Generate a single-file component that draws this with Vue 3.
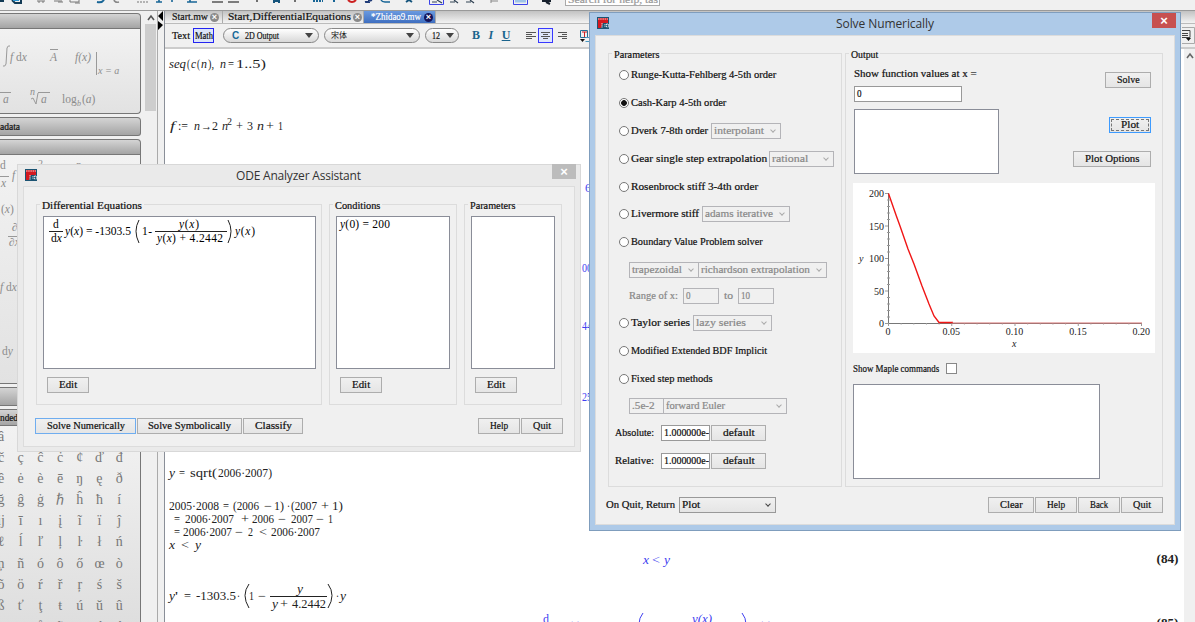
<script setup>
import { ref, h } from "vue";

const method = ref('ck45');
const showCommands = ref(false);

// narrow fixed pitch label, the width follows the number of characters
const Txt = (props) => {
  const w = props.w || props.t.length * 4.54;
  return h('svg', { class: 'txt', width: w, height: 12 }, [
    h('text', { x: 0, y: 9, textLength: w, lengthAdjust: 'spacingAndGlyphs' }, props.t),
  ]);
}
Txt.props = ['t', 'w'];

const methods = [
  { id: 'rkf45', label: 'Runge-Kutta-Fehlberg 4-5th order' },
  { id: 'ck45', label: 'Cash-Karp 4-5th order' },
  { id: 'dverk78', label: 'Dverk 7-8th order', option: 'interpolant', width: 70 },
  { id: 'gear', label: 'Gear single step extrapolation', option: 'rational', width: 65, tight: true },
  { id: 'rosenbrock', label: 'Rosenbrock stiff 3-4th order' },
  { id: 'lsode', label: 'Livermore stiff', option: 'adams iterative', width: 88 },
  { id: 'bvp', label: 'Boundary Value Problem solver' },
]

const moreMethods = [
  { id: 'taylor', label: 'Taylor series', option: 'lazy series', width: 79 },
  { id: 'mebdfi', label: 'Modified Extended BDF Implicit' },
  { id: 'fixed', label: 'Fixed step methods' },
]

const tolerances = ['Absolute:', 'Relative:']

const letters = [
  'â', 'à', 'ă', 'ā', 'ą', 'å', 'ć',
  'č', 'ç', 'ĉ', 'ċ', '¢', 'ď', 'đ',
  'ê', 'ė', 'è', 'ē', 'ŋ', 'ę', 'ð',
  'ğ', 'ĝ', 'ġ', 'ℏ', 'ĥ', 'ħ', 'í',
  'ij', 'ī', 'ı', 'į', 'ĩ', 'ï', 'ĵ',
  'ℓ', 'ĺ', 'ľ', 'ļ', 'ŀ', 'ł', 'ń',
  'ņ', 'ñ', 'ó', 'ô', 'ő', 'œ', 'ò',
  'õ', 'ö', 'ŕ', 'ř', 'ŗ', 'ś', 'š',
  'ß', 'ť', 'ţ', 'ŧ', 'ú', 'ŭ', 'û',
  'ų', 'ų', 'ů', 'ũ', 'ų', 'ý', 'ź',
]

// x, baseline, text, width, italic
const sheet = [
  [4, 19, 'seq', 17, true], [22, 19, '(', 3], [26, 19, 'c', 5, true], [32, 19, '(', 3], [36, 19, 'n', 6, true], [43, 19, '),', 6],
  [55, 19, 'n', 6, true], [63, 19, '=', 6], [71, 19, '1..5)', 30],
  [5, 81, 'f', 5, true], [13, 81, ':=', 10], [29, 81, 'n', 6, true], [36, 81, '→', 11], [47, 81, '2', 6], [57, 81, 'n', 6, true],
  [71, 81, '+', 7], [82, 81, '3', 6], [92, 81, 'n', 7, true], [101, 81, '+', 8], [113, 81, '1', 5],
  [4, 428, 'y', 6, true], [14, 428, '=', 6], [25, 428, 'sqrt(', 27], [53, 428, '2006·2007)', 54],
  [4, 461, '2005·2008', 50], [58, 461, '=', 6], [68, 461, '(2006', 26], [99, 461, '−', 8], [109, 461, '1)', 10], [122, 461, '·', 3],
  [126, 461, '(2007', 26], [156, 461, '+', 8], [167, 461, '1)', 11],
  [9, 474, '=', 6], [20, 474, '2006·2007', 49], [76, 474, '+', 8], [87, 474, '2006', 22], [113, 474, '−', 8], [126, 474, '2007', 22],
  [151, 474, '−', 8], [163, 474, '1', 5],
  [9, 487, '=', 6], [18, 487, '2006·2007', 49], [70, 487, '−', 8], [83, 487, '2', 5], [94, 487, '<', 8], [106, 487, '2006·2007', 49],
  [4, 500, 'x', 6, true], [16, 500, '<', 8], [30, 500, 'y', 6, true],
  [4, 551, 'y', 6, true], [10, 551, "'", 3], [19, 551, '=', 7], [31, 551, '-1303.5', 40], [72, 551, '·', 3], [84, 551, '1', 5], [93, 551, '−', 8],
  [132, 544, 'y', 6, true], [107, 559, 'y', 6, true], [115, 559, '+', 8], [127, 559, '4.2442', 34], [171, 551, '·', 3], [175, 551, 'y', 6, true],
]

const output = [
  [420, 143, '6', 6], [417, 223, '00', 10], [417, 281, '44', 10], [417, 352, '25', 10],
  [478, 515, 'x', 6, true], [487, 515, '<', 8], [499, 515, 'y', 6, true],
  [378, 574, 'd', 6], [399, 581, 'y(x)', 16, true], [420, 581, '= -1303.5', 50], [480, 581, '1 −', 16],
  [527, 574, 'y(x)', 20, true], [588, 581, 'y(x)', 18, true],
]

const yTicks = [200, 150, 100, 50, 0]
const xTicks = ['0', '0.05', '0.10', '0.15', '0.20']
</script>

<template>
  <div class="desktop">
    <div class="topbar">
      <svg width="565" height="10" fill="none">
        <path d="M0 1h4M12 0l3 3h6V0" stroke="#123a55" stroke-width="2" />
        <path d="M13 0h6" stroke="#2b93d0" stroke-width="2" />
        <path d="M38 0v2h2V0M42 0v2h2V0M54 1h8M58 2h5M70 0v2h9V0M75 3h5" stroke="#777" />
        <path d="M97 2Q102 3 104 0" stroke="#176596" stroke-width="2" />
        <path d="M114 0Q115 3 119 2" stroke="#888" stroke-width="1.6" />
        <path d="M137 2h11" stroke="#777" stroke-dasharray="2 1" />
        <path d="M159 0v2M156 2h6M172 0v2M187 2h10M190 0v2" stroke="#176596" stroke-width="1.6" />
        <path d="M212 2h11M228 2h11" stroke="#555" stroke-width="1.5" />
        <path d="M257 0v2M295 0v2" stroke="#444" stroke-width="1.5" />
        <path d="M274 0v3M279 0v3M273 1h7" stroke="#15547c" stroke-width="2" />
        <path d="M313 1h10M333 1h2" stroke="#176596" stroke-width="2" stroke-dasharray="2 1" />
        <path d="M348 0Q352 4 356 0" stroke="#cc2020" stroke-width="2" />
        <path d="M365 2l7-2M369 0v3" stroke="#203c78" stroke-width="2" />
        <path d="M381 0Q382 2 385 2h5" stroke="#176596" stroke-width="1.5" />
        <path d="M406 2l3-2 3 2" stroke="#15547c" stroke-width="2" />
        <path d="M429.500 0v4.500h14V0M513.500 0v4.500h14V0" stroke="#3b43e8" />
        <path d="M515 1h11" stroke="#9ec4e8" stroke-width="3" />
        <path d="M432 2h5M437 0l5 3M450 2h5M454 0l4 3M466 2h5M470 0l4 3" stroke="#345" stroke-width="1.2" />
        <path d="M491 1h7M491 0v3" stroke="#888" />
        <path d="M542 1h9M546 2l4 2" stroke="#16202c" stroke-width="2" />
      </svg>
      <div class="search"><Txt t="Search for help, tas" w="90" /></div>
    </div>

    <div class="body">
      <aside class="palettes">
        <div class="bar first"></div>
        <svg class="sheet-one" width="141" height="85">
          <path d="M10 17q-2-1-3 2l-1 16q-1 3-3 2" class="rule" />
          <text x="10" y="32"><tspan class="it">f</tspan> d<tspan class="it">x</tspan></text>
          <path d="M50 20.500h8M96.500 23v23M0 63.500h11M38 63.500h12M31 70l2-1 3 6 2-11" class="rule" />
          <text x="50" y="32" class="it">A</text>
          <text x="75" y="32" class="it">f(x)</text>
          <text x="98" y="45" class="it small">x = a</text>
          <text x="3" y="74" class="it">a</text>
          <text x="30" y="66" class="it small">n</text>
          <text x="41" y="74" class="it">a</text>
          <text x="62" y="74">log</text>
          <text x="77" y="77" class="it tiny">b</text>
          <text x="82" y="74"><tspan>(</tspan><tspan class="it">a</tspan><tspan>)</tspan></text>
        </svg>
        <div class="bar second"><Txt t="adata" w="20" /></div>
        <div class="bar third"></div>
        <svg class="sheet-two" width="141" height="229">
          <text x="0" y="14">d</text>
          <path d="M0 21.500h9M8 81.500h10" class="rule" />
          <text x="1" y="32" class="it">x</text>
          <text x="12" y="24" class="it">f</text>
          <text x="38" y="12" class="small">2</text>
          <text x="76" y="13" class="it small">n</text>
          <text x="1" y="58">(<tspan class="it">x</tspan>)</text>
          <text x="12" y="76">∂</text>
          <text x="9" y="91">∂<tspan class="it">x</tspan></text>
          <text x="0" y="136"><tspan class="it">f</tspan> d<tspan class="it">x</tspan></text>
          <text x="2" y="200">d<tspan class="it">y</tspan></text>
        </svg>
        <div class="bar fourth"></div>
        <div class="bar fifth"><Txt t="nded" w="18" /></div>
        <div class="letters">
          <span v-for="(letter, i) in letters" :key="i">{{ letter }}</span>
        </div>
      </aside>

      <div class="scroll">
        <svg width="12" height="13"><path d="M3 9l3-4 3 4" fill="none" stroke="#555" stroke-width="1.6" /></svg>
        <div class="thumb"></div>
      </div>
      <div class="splitter">
        <svg width="6" height="20"><path d="M5 0v10L0 5zM0 10v9l5-5z" fill="#000" /></svg>
      </div>

      <main class="document">
        <div class="tabs">
          <div class="tab one"><Txt t="Start.mw" w="36" /><i></i></div>
          <div class="tab two"><Txt t="Start,DifferentialEquations" w="123" /><i></i></div>
          <div class="tab active"><Txt t="*Zhidao9.mw" w="50" /><i></i></div>
        </div>
        <div class="format">
          <Txt t="Text" w="18" />
          <span class="math"><Txt t="Math" w="18" /></span>
          <div class="pill style"><b>C</b><Txt t="2D Output" w="34" /><em></em></div>
          <div class="pill face"><span>宋体</span><em></em></div>
          <div class="pill points"><Txt t="12" w="8" /><em></em></div>
          <div class="marks"><b>B</b><b class="it">I</b><b class="under">U</b></div>
          <svg width="72" height="18" class="aligns" fill="none">
            <rect x="13.500" y="1.500" width="14" height="14" fill="#dfe6fb" stroke="#3838ff" />
            <path d="M1 5.500h10M1 7.500h6M1 9.500h10M1 11.500h6M16 5.500h9M18 7.500h5M16 9.500h9M18 11.500h5M33 5.500h9M37 7.500h5M33 9.500h9M37 11.500h5" stroke="#555" />
            <path d="M55.500 3.500h7v7h-7z" stroke="#287094" /><path d="M57 5h5M59.500 5v5" stroke="#c22" />
            <path d="M55 12h5l-2.500 3z" fill="#111" /><path d="M60.500 10.500h4v4h-4" stroke="#4b97be" />
          </svg>
          <svg width="13" height="18" class="last-tool" fill="none">
            <path d="M0 .5h12.500v16H0" stroke="#aaa" /><path d="M0 3.500h8v7H0M0 6.500h6M0 8.500h6" stroke="#444" /><path d="M4 11h5l-2.500 3z" fill="#111" />
          </svg>
        </div>
        <div class="page">
          <svg class="math-sheet" width="1019" height="573">
            <g class="input">
              <text v-for="(s, i) in sheet" :key="i" :x="s[0]" :y="s[1]" :textLength="s[3]" lengthAdjust="spacingAndGlyphs" :class="{ it: s[4] }">{{ s[2] }}</text>
              <text x="62" y="76" class="power">2</text>
              <path d="M105 547.500h57M84 535q-8 11 0 24M163 535q8 11 0 24" fill="none" stroke="#222" />
            </g>
            <g class="output">
              <text v-for="(s, i) in output" :key="i" :x="s[0]" :y="s[1]" :textLength="s[3]" lengthAdjust="spacingAndGlyphs" :class="{ it: s[4] }">{{ s[2] }}</text>
              <path d="M478 564q-4 5-4 11M577 564q4 5 4 11" fill="none" stroke="#4040f0" />
            </g>
            <text x="991.500" y="514" class="number" textLength="22" lengthAdjust="spacingAndGlyphs">(84)</text>
            <text x="991.500" y="578" class="number" textLength="22" lengthAdjust="spacingAndGlyphs">(85)</text>
          </svg>
          <div class="page-scroll">
            <svg width="10" height="13"><path d="M3 9l3-4 3 4" fill="none" stroke="#666" stroke-width="1.6" /></svg>
          </div>
        </div>
      </main>
    </div>

    <section class="window analyzer">
      <header>
        <svg width="13" height="13" class="logo"><rect width="12" height="12" fill="#1b5473" /><path d="M1 1h10v5H6L4 11H1z" fill="#d41920" /><path d="M1 2h10M5 6v5M8 7v3M9.500 7h2v3h-2z" fill="none" stroke="#fff" stroke-width=".8" stroke-dasharray="1.500 .7" /></svg>
        <svg width="126" height="16" class="title"><text x="0" y="12" textLength="125">ODE Analyzer Assistant</text></svg>
        <button class="close">×</button>
      </header>
      <div class="inner">
        <div class="groups">
          <div class="group equations">
            <span class="legend"><Txt t="Differential Equations" w="100" /></span>
            <div class="list">
              <svg width="272" height="40">
                <text x="9" y="11">d</text>
                <text x="7" y="25">d<tspan class="it">x</tspan></text>
                <path d="M5 14.500h14M111 14.500h72M95 3q-6 11 0 23M184 3q6 11 0 23" fill="none" stroke="#222" />
                <text x="21" y="18" textLength="66" lengthAdjust="spacingAndGlyphs"><tspan class="it">y</tspan>(<tspan class="it">x</tspan>) = -1303.5</text>
                <text x="98" y="18" textLength="10">1 -</text>
                <text x="135" y="11" textLength="20"><tspan class="it">y</tspan>(<tspan class="it">x</tspan>)</text>
                <text x="113" y="25" textLength="66"><tspan class="it">y</tspan>(<tspan class="it">x</tspan>) + 4.2442</text>
                <text x="191" y="18" textLength="20"><tspan class="it">y</tspan>(<tspan class="it">x</tspan>)</text>
              </svg>
            </div>
            <button class="edit"><Txt t="Edit" /></button>
          </div>
          <div class="group conditions">
            <span class="legend"><Txt t="Conditions" /></span>
            <div class="list">
              <svg width="110" height="20"><text x="3" y="11" textLength="50"><tspan class="it">y</tspan>(0) = 200</text></svg>
            </div>
            <button class="edit"><Txt t="Edit" /></button>
          </div>
          <div class="group parameters">
            <span class="legend"><Txt t="Parameters" /></span>
            <div class="list"></div>
            <button class="edit"><Txt t="Edit" /></button>
          </div>
        </div>
        <footer>
          <button class="default b101"><Txt t="Solve Numerically" w="78" /></button>
          <button class="b105"><Txt t="Solve Symbolically" w="83" /></button>
          <button class="b60"><Txt t="Classify" w="37" /></button>
          <span class="grow"></span>
          <button class="b42"><Txt t="Help" /></button>
          <button class="b42"><Txt t="Quit" /></button>
        </footer>
      </div>
    </section>

    <section class="window solver">
      <header>
        <svg width="13" height="13" class="logo"><rect width="12" height="12" fill="#1b5473" /><path d="M1 1h10v5H6L4 11H1z" fill="#d41920" /><path d="M1 2h10M5 6v5M8 7v3M9.500 7h2v3h-2z" fill="none" stroke="#fff" stroke-width=".8" stroke-dasharray="1.500 .7" /></svg>
        <svg width="99" height="16" class="title"><text x="0" y="12" textLength="98">Solve Numerically</text></svg>
        <button class="close">×</button>
      </header>
      <div class="inner">
        <div class="columns">
          <div class="group methods">
            <span class="legend"><Txt t="Parameters" /></span>
            <div class="row" v-for="m in methods" :key="m.id" @click="method = m.id">
              <span class="radio" :class="{ on: method === m.id }"></span>
              <Txt :t="m.label" />
              <div v-if="m.option" class="select off" :class="{ tight: m.tight }" :style="{ width: m.width + 'px' }"><Txt :t="m.option" /><em></em></div>
            </div>
            <div class="row sub">
              <div class="select off trap"><Txt t="trapezoidal" /><em></em></div>
              <div class="select off rich"><Txt t="richardson extrapolation" /><em></em></div>
            </div>
            <div class="row sub range">
              <Txt t="Range of x:" w="49" />
              <div class="field off"><Txt t="0" /></div>
              <Txt t="to" />
              <div class="field off"><Txt t="10" /></div>
            </div>
            <div class="row" v-for="m in moreMethods" :key="m.id" @click="method = m.id">
              <span class="radio" :class="{ on: method === m.id }"></span>
              <Txt :t="m.label" />
              <div v-if="m.option" class="select off" :style="{ width: m.width + 'px' }"><Txt :t="m.option" /><em></em></div>
            </div>
            <div class="row sub fixed">
              <div class="field off step"><Txt t=".5e-2" /></div>
              <div class="select off euler"><Txt t="forward Euler" /><em></em></div>
            </div>
            <div class="row tolerance" v-for="name in tolerances" :key="name">
              <Txt :t="name" w="39" />
              <div class="field"><Txt t="1.000000e-" w="45" /></div>
              <button><Txt t="default" /></button>
            </div>
          </div>

          <div class="group result">
            <span class="legend"><Txt t="Output" /></span>
            <div class="values">
              <div class="ask">
                <Txt t="Show function values at x =" />
                <div class="field"><Txt t="0" /></div>
                <div class="area"></div>
              </div>
              <div class="actions">
                <button class="b46"><Txt t="Solve" /></button>
                <button class="focused b42"><Txt t="Plot" /></button>
                <button class="b78"><Txt t="Plot Options" /></button>
              </div>
            </div>
            <svg class="plot" width="302" height="170">
              <path d="M35.500 10v130M35 140.500h254" stroke="#777" fill="none" />
              <path v-for="n in 21" :key="n" :d="`M${n % 5 === 1 ? 32 : 34} ${10.5 + (n - 1) * 6.5}h3`" stroke="#999" />
              <path v-for="n in 21" :key="'x' + n" :d="`M${35.5 + (n - 1) * 12.65} 140v${n % 5 === 1 ? 3 : 1.5}`" stroke="#999" />
              <text v-for="(y, i) in yTicks" :key="y" x="31" :y="14 + i * 32.5" text-anchor="end">{{ y }}</text>
              <text v-for="(x, i) in xTicks" :key="x" :x="35 + i * 63.3" y="152" text-anchor="middle">{{ x }}</text>
              <text x="6" y="79" class="it">y</text>
              <text x="159" y="164" class="it">x</text>
              <path d="M35.500 10.500L43 32 47 43 55 66 61 81 69 103 76 121 81 133 86 139.500h14" stroke="#f01616" stroke-width="1.400" fill="none" />
              <path d="M99 140h190" stroke="#d77070" fill="none" />
            </svg>
            <label class="commands" @click="showCommands = !showCommands">
              <Txt t="Show Maple commands" /><span class="check">{{ showCommands ? '✓' : '' }}</span>
            </label>
            <div class="area code"></div>
          </div>
        </div>
        <footer>
          <Txt t="On Quit, Return" w="69" />
          <div class="select leave"><Txt t="Plot" /><em></em></div>
          <span class="grow"></span>
          <button class="b46"><Txt t="Clear" /></button>
          <button class="b42"><Txt t="Help" /></button>
          <button class="b42"><Txt t="Back" /></button>
          <button class="b42"><Txt t="Quit" /></button>
        </footer>
      </div>
    </section>
  </div>
</template>

<style>
body {
  margin: 0;
  overflow: hidden;
}
</style>

<style scoped>
* {
  box-sizing: border-box;
}

.desktop {
  position: relative;
  width: 1195px;
  height: 622px;
  overflow: hidden;
  background: #f0f0f0;
  font-family: "Liberation Serif", "Noto Sans CJK SC", serif;
  color: #111;
}

svg {
  display: block;
  flex: none;
}

.txt {
  overflow: visible;
  fill: currentColor;
  stroke: currentColor;
  stroke-width: .2px;
  font-family: "Liberation Serif", serif;
  font-size: 10px;
}

.it {
  font-style: italic;
}

.grow {
  flex: 1;
}

.topbar {
  height: 10px;
  display: flex;
  overflow: hidden;
}

.search {
  width: 95px;
  height: 6px;
  overflow: hidden;
  background: #fff;
  border: 1px solid #aaa;
  border-top: 0;
  color: #999;
  padding-left: 2px;
}

.search .txt {
  margin-top: -6px;
}

.body {
  display: flex;
  height: 612px;
  border-top: 1px solid #999;
}

/* palettes */
.palettes {
  width: 145px;
  overflow: hidden;
  padding-top: 2px;
}

.bar {
  width: 141px;
  height: 19px;
  border: 1px solid #777;
  border-left: 0;
  border-radius: 0 4px 3px 0;
  background: linear-gradient(#d4d4d4, #a4a4a4);
  padding-top: 3px;
}

.first {
  height: 16px;
  border-radius: 0 4px 0 0;
}

.sheet-one, .sheet-two {
  background: linear-gradient(#f2f2f2, #e2e2e2);
  border: 1px solid #777;
  border-top: 0;
  border-left: 0;
  border-radius: 0 0 4px 0;
  fill: #8c8c8c;
  font-size: 11.5px;
}

.sheet-one {
  margin-bottom: 3px;
}

.rule {
  fill: none;
  stroke: #999;
}

.small {
  font-size: 10px;
}

.tiny {
  font-size: 8px;
}

.third {
  margin-top: 3px;
  height: 16px;
  border-radius: 0 4px 0 0;
}

.fourth {
  margin-top: 3px;
}

.fifth {
  margin-top: 3px;
  height: 17px;
  padding-top: 2px;
  border-radius: 0 4px 0 0;
}

.letters {
  width: 141px;
  height: 200px;
  display: grid;
  grid-template-columns: repeat(7, 19.7px);
  grid-auto-rows: 21.1px;
  justify-content: end;
  padding-right: 11px;
  background: linear-gradient(#f2f2f2, #dedede);
  border-right: 1px solid #777;
  color: #777;
  font-size: 14px;
  line-height: 21px;
  text-align: center;
}

.scroll {
  width: 12px;
}

.thumb {
  width: 11px;
  height: 87px;
  background: #cdcdcd;
}

.splitter {
  width: 8px;
  border-left: 1px solid #aaa;
  border-right: 1px solid #8a8f98;
}

/* document */
.document {
  flex: 1;
  display: flex;
  flex-direction: column;
}

.tabs {
  display: flex;
  height: 13px;
  background: linear-gradient(#c2c2c2, #f3f3f3);
  border-bottom: 1px solid #bbb;
}

.tab {
  display: flex;
  align-items: center;
  padding-left: 7px;
  border-right: 1px solid #aaa;
}

.tab i {
  width: 9px;
  height: 9px;
  border-radius: 50%;
  background: #8a8a8a;
  margin-left: 2px;
  display: grid;
  place-content: center;
}

.tab i::before {
  content: "×";
  color: #fff;
  font: bold 9px/9px "Liberation Sans", sans-serif;
}

.one {
  width: 58px;
}

.two {
  width: 141px;
  padding-left: 5px;
}

.active {
  width: 72px;
  background: linear-gradient(#6a9ae0, #3f6fc0);
  color: #fff;
}

.active i {
  background: #14145a;
  margin-left: 3px;
}

.format {
  height: 25px;
  display: flex;
  align-items: center;
  padding-left: 7px;
  border-bottom: 2px solid #ccc;
}

.math {
  width: 21px;
  height: 15px;
  margin: 0 9px 0 3px;
  padding: 1px 0 0 1px;
  border: 1px solid #2424f0;
  background: #dbe5f8;
  overflow: hidden;
}

.pill {
  height: 15px;
  display: flex;
  align-items: center;
  border: 1px solid #888;
  border-radius: 8px;
  background: linear-gradient(#fff, #d8d8d8);
  margin-right: 5px;
  padding: 0 5px 0 8px;
}

.pill b {
  font: bold 10px "Liberation Sans", sans-serif;
  color: #196a99;
  margin-right: 6px;
}

.pill span {
  font-size: 8px;
  line-height: 12px;
  margin-left: -2px;
}

.pill em {
  margin-left: auto;
  border: 4px solid transparent;
  border-top: 5px solid #444;
  border-bottom: 0;
}

.style, .face {
  width: 96px;
}

.points {
  width: 34px;
  padding-left: 6px;
  padding-right: 4px;
}

.marks {
  display: flex;
  gap: 8.5px;
  width: 55px;
  padding-left: 8px;
  color: #1b648d;
  font-size: 12px;
}

.under {
  text-decoration: underline;
}

.aligns {
  margin-left: 6px;
}

.last-tool {
  margin-left: auto;
}

.page {
  flex: 1;
  display: flex;
  background: #fff;
}

.math-sheet {
  font-family: "Liberation Serif", serif;
  font-size: 12px;
  fill: #222;
}

.power {
  font-size: 10px;
}

.output {
  fill: #4040f0;
}

.number {
  font-size: 11.5px;
  font-weight: bold;
}

.page-scroll {
  width: 11px;
  background: #f0f0f0;
}

/* windows */
.window {
  position: absolute;
}

.window header {
  display: flex;
  position: relative;
  justify-content: center;
}

.logo {
  position: absolute;
}

.title {
  font: 12px "Open Sans", sans-serif;
  fill: #333;
}

.close {
  position: absolute;
  top: 0;
  width: 24px;
  height: 15px;
  padding: 0;
  border: 0;
  background: #bcbcbc;
  color: #fff;
  font: bold 13px/13px "Liberation Sans", sans-serif;
}

.inner {
  background: #f0f0f0;
  border: 1px solid #dcdcdc;
}

.group {
  border: 1px solid #dcdcdc;
  position: relative;
}

.legend {
  position: absolute;
  top: -5px;
  left: 3px;
  background: #f0f0f0;
  padding: 0 2px;
}

.list, .area {
  background: #fff;
  border: 1px solid #8a8d98;
}

button {
  height: 16px;
  padding: 0;
  border: 1px solid #adadad;
  background: linear-gradient(#f0f0f0, #e5e5e5);
  color: #111;
  display: flex;
  align-items: center;
  justify-content: center;
}

.close {
  display: block;
}

footer {
  display: flex;
  gap: 1px;
}

.b42 {
  width: 42px;
}

.b46 {
  width: 46px;
}

.b60 {
  width: 60px;
}

.b78 {
  width: 78px;
}

.b101 {
  width: 101px;
}

.b105 {
  width: 105px;
}

.analyzer {
  left: 17px;
  top: 164px;
  width: 564px;
  height: 288px;
  background: #eaeaea;
  border: 1px solid #d8d8d8;
  padding: 0 5px;
}

.analyzer header {
  height: 21px;
  padding-top: 3px;
}

.analyzer .logo {
  left: 2px;
  top: 4px;
}

.analyzer .close {
  right: -1px;
  top: -1px;
}

.analyzer .inner {
  height: 261px;
  padding: 17px 11px 0 12px;
}

.groups {
  display: flex;
  gap: 7px;
}

.groups .group {
  height: 201px;
  padding: 11px 6px 0;
}

.groups .equations {
  width: 286px;
  padding-right: 5px;
}

.conditions {
  width: 128px;
}

.parameters {
  width: 98px;
}

.list {
  height: 153px;
  font-size: 11.5px;
  overflow: hidden;
}

.edit {
  width: 42px;
  margin: 8px 0 0 4px;
}

.analyzer footer {
  padding-top: 13px;
  margin-left: -1px;
}

.default {
  border-color: #6fadef;
}

.solver {
  left: 589px;
  top: 12px;
  width: 592px;
  height: 519px;
  background: #aecae8;
  border: 1px solid #7f9dbd;
  padding: 0 5px;
}

.solver header {
  height: 22px;
  padding-top: 3px;
}

.solver .logo {
  left: 2px;
  top: 4px;
}

.solver .close {
  right: -1px;
  background: #c75050;
}

.solver .inner {
  height: 490px;
  padding: 17px 11px 0 12px;
}

.columns {
  display: flex;
  gap: 3px;
}

.columns .group {
  height: 434px;
}

.methods {
  width: 235px;
  padding-top: 7px;
}

.row {
  height: 27.9px;
  display: flex;
  align-items: center;
  padding-left: 10px;
}

.radio {
  width: 10px;
  height: 10px;
  border: 1px solid #777;
  border-radius: 50%;
  background: #fff;
  margin-right: 2px;
}

.radio.on {
  background: radial-gradient(#111 0 2.5px, #fff 3.2px);
}

.select, .field {
  height: 16px;
  flex: none;
  display: flex;
  align-items: center;
  border: 1px solid #999;
  background: #fff;
  padding-left: 2px;
  overflow: hidden;
}

.select {
  background: linear-gradient(#f0f0f0, #e5e5e5);
  padding-right: 4px;
}

.row .select {
  margin-left: 3px;
}

.row .tight {
  margin-left: 2px;
}

.select em {
  width: 4px;
  height: 4px;
  margin: -2px 1px 0 auto;
  border: solid #444;
  border-width: 0 1.5px 1.5px 0;
  transform: rotate(45deg);
}

.off {
  color: #888;
  background: #f0f0f0;
  border-color: #b4b4b8;
}

.off em {
  border-color: #aaa;
}

.sub {
  height: 27px;
  padding-left: 20px;
}

.sub .select {
  margin: 0;
}

.trap {
  width: 70px;
}

.sub .rich {
  width: 129px;
  margin-left: -1px;
}

.range {
  height: 26px;
  color: #888;
}

.range .field {
  width: 36px;
  margin: 0 5px;
}

.fixed {
  height: 26px;
}

.step {
  width: 35px;
}

.sub .euler {
  width: 124px;
  margin-left: -1px;
}

.tolerance {
  padding-left: 6px;
}

.tolerance .field {
  width: 49px;
  margin: 0 1px 0 7px;
}

.tolerance button {
  width: 55px;
}

.result {
  width: 318px;
  padding: 14px 10px 0 7px;
}

.values {
  display: flex;
  justify-content: space-between;
  height: 115px;
}

.ask {
  padding-left: 1px;
}

.ask .field {
  width: 108px;
  margin: 6px 0 7px;
}

.ask .area {
  width: 145px;
  height: 65px;
}

.actions {
  display: flex;
  flex-direction: column;
  align-items: flex-end;
  padding: 4px 1px 0 0;
}

.focused {
  margin: 29px 0 18px;
  border-color: #3d9bff;
  outline: 1px dashed #777;
  outline-offset: -3px;
}

.plot {
  background: #fff;
  font-size: 10px;
  fill: #222;
}

.commands {
  display: flex;
  align-items: center;
  height: 31px;
  gap: 7px;
}

.check {
  width: 11px;
  height: 11px;
  border: 1px solid #888;
  background: #fff;
  font-size: 9px;
  line-height: 9px;
}

.code {
  width: 247px;
  height: 95px;
}

.solver footer {
  margin: 10px 0 0 -2px;
  align-items: center;
}

.leave {
  width: 97px;
  margin-left: 3px;
}
</style>
